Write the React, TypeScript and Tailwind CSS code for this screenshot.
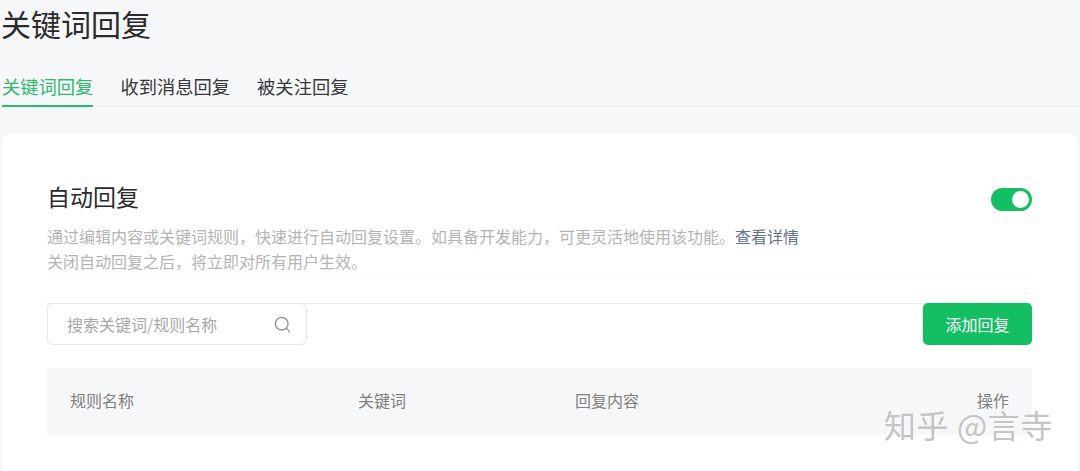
import { Search } from "lucide-react";

const tabs = ["关键词回复", "收到消息回复", "被关注回复"];
const font = "[font-family:'Noto_Sans_CJK_SC','Noto_Sans',sans-serif]";

export default function App() {
  return (
    <div className={`relative h-[471px] w-[1080px] overflow-hidden bg-[#f6f7f9] ${font}`}>
      <h1 className="h-[48px] pl-[1px] pt-[1px] text-[30px] font-normal leading-[44px] text-[#2b2b2b]">关键词回复</h1>

      <div className="mt-[20px] flex h-[39px] gap-[27px] border-b border-[#ebecee] pl-[2px]">
        {tabs.map((tab, i) => (
          <div
            key={tab}
            className={`h-[39px] text-[18.3px] leading-[36px] ${
              i === 0 ? "border-b-[2px] border-[#2fb96c] text-[#2fb96c]" : "text-[#383838]"
            }`}
          >
            {tab}
          </div>
        ))}
      </div>

      <div className="mx-[2px] mt-[27px] h-[340px] rounded-t-[8px] bg-white pl-[45px] pr-[46px] pt-[43px]">
        <div className="flex justify-between border-b border-[#fafafa] pb-[4px]">
          <div>
            <h2 className="text-[23px] font-normal leading-[38px] text-[#2b2b2b]">自动回复</h2>
            <p className="mt-[9px] text-[16px] leading-[25px] text-[#b4b4b4]">
              通过编辑内容或关键词规则，快速进行自动回复设置。如具备开发能力，可更灵活地使用该功能。
              <span className="text-[#64728f]">查看详情</span>
            </p>
            <p className="text-[16px] leading-[25px] text-[#b4b4b4]">关闭自动回复之后，将立即对所有用户生效。</p>
          </div>
          <div className="mt-[11px] flex h-[23px] w-[41px] items-center justify-end rounded-full bg-[#12bf62] pr-[3px]">
            <div className="h-[17px] w-[17px] rounded-full bg-white" />
          </div>
        </div>

        <div className="mt-[24px] flex items-start justify-between border-t border-[#ececec]">
          <div className="-mt-px flex h-[42px] w-[260px] items-center justify-between rounded-[6px] border border-[#e8e8e8] bg-white pl-[19px] pr-[14px]">
            <span className="text-[16px] text-[#a8a8a8]">搜索关键词/规则名称</span>
            <Search size={19} strokeWidth={1.7} className="text-[#8f8f8f]" />
          </div>
          <div className="-mt-px flex h-[42px] w-[109px] items-center justify-center rounded-[5px] bg-[#12bf62] text-[16px] text-white">
            添加回复
          </div>
        </div>

        <div className="mt-[23px] grid h-[67px] grid-cols-[288px_217px_1fr_auto] items-center bg-[#f6f7f9] pb-[3px] pl-[23px] pr-[23px] text-[16px] text-[#808080]">
          <span>规则名称</span>
          <span>关键词</span>
          <span>回复内容</span>
          <span>操作</span>
        </div>
      </div>

      {/* watermark baked into the screenshot */}
      <div className="absolute left-[884px] top-[402px] text-[32px] leading-[44px] tracking-[0.6px] text-[#c4c4c4] [text-shadow:1px_1px_0_#ffffff]">
        知乎 @言寺
      </div>
    </div>
  );
}
